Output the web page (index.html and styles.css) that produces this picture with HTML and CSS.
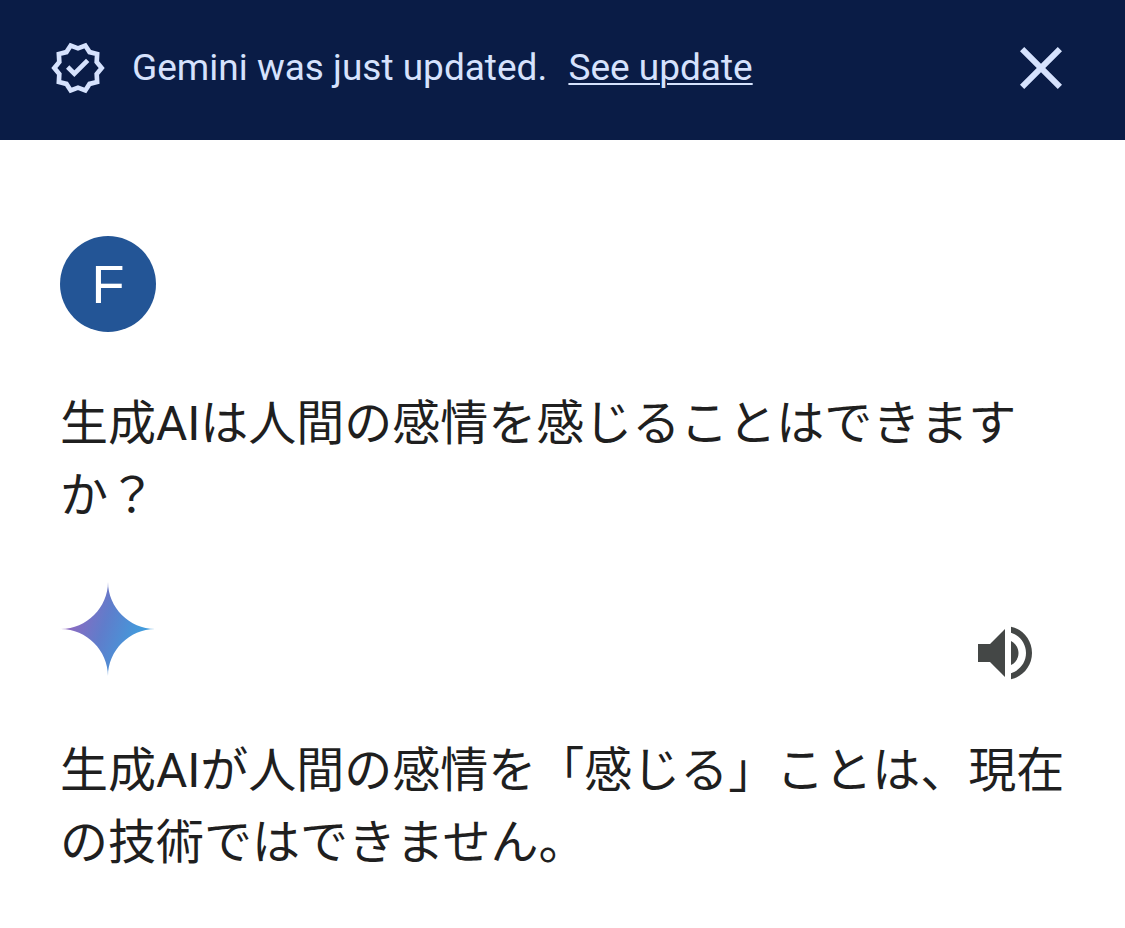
FILE: index.html
```html
<!DOCTYPE html>
<html lang="ja">
<head>
  <meta charset="UTF-8">
  <meta name="viewport" content="width=device-width, initial-scale=1.0">
  <title>Gemini</title>
  <link rel="stylesheet" href="styles.css">
</head>
<body>

  <header class="banner" lang="en">
    <svg class="banner-icon" viewBox="-81 -81 162 162" fill="none" stroke="currentColor" stroke-width="14" aria-hidden="true">
      <path d="M71 0 56.1 18.2 57.4 41.7 34.7 47.7 21.9 67.5 0 59-21.9 67.5-34.7 47.7-57.4 41.7-56.1 18.2-71 0-56.1-18.2-57.4-41.7-34.7-47.7-21.9-67.5 0-59 21.9-67.5 34.7-47.7 57.4-41.7 56.1-18.2z"/>
      <path d="M-31-3-11 17 29-23"/>
    </svg>
    <p class="banner-text">Gemini was just updated. <a href="#update">See update</a></p>
    <button class="icon-button" type="button" aria-label="Close">
      <svg viewBox="0 0 24 24" fill="currentColor"><path d="M19 6.41 17.59 5 12 10.59 6.41 5 5 6.41 10.59 12 5 17.59 6.41 19 12 13.41 17.59 19 19 17.59 13.41 12z"/></svg>
    </button>
  </header>

  <main class="chat">
    <section class="question">
      <div class="avatar">F</div>
      <p>生成AIは人間の感情を感じることはできますか？</p>
    </section>

    <section class="answer">
      <div class="answer-head">
        <svg class="spark" viewBox="0 0 96 96" aria-hidden="true">
          <defs>
            <linearGradient id="spark-color" gradientUnits="userSpaceOnUse" x1="8" y1="36" x2="78" y2="60">
              <stop offset="0" stop-color="#9168c0"/>
              <stop offset="0.5" stop-color="#5f7dcb"/>
              <stop offset="1" stop-color="#429bdc"/>
            </linearGradient>
          </defs>
          <path fill="url(#spark-color)" d="M48 1C48 26.500 26.500 48 1 48 26.500 48 48 69.500 48 95 48 69.500 69.500 48 95 48 69.500 48 48 26.500 48 1z"/>
        </svg>
        <button class="icon-button speak" type="button" aria-label="読み上げる">
          <svg viewBox="0 0 24 24" fill="currentColor"><path d="M3 9v6h4l5 5V4L7 9H3zm13.500 3c0-1.770-1.020-3.290-2.500-4.030v8.050c1.480-.730 2.500-2.250 2.500-4.020zM14 3.230v2.060c2.890.860 5 3.540 5 6.710s-2.110 5.850-5 6.710v2.060c4.010-.910 7-4.490 7-8.770s-2.990-7.860-7-8.770z"/></svg>
        </button>
      </div>
      <p>生成AIが人間の感情を「感じる」ことは、現在の技術ではできません。</p>
    </section>
  </main>

</body>
</html>
```

FILE: styles.css
```css
:root {
  --banner: #0a1c46;
  --banner-text: #d6e2fd;
  --text: #1f1f1f;
  --icon: #444746;
  --avatar: #235596;
}

body {
  margin: 0;
  font-family: Roboto, "Noto Sans CJK JP", sans-serif;
  background-color: white;
  color: var(--text);
}

p {
  margin: 0;
}

.banner {
  display: flex;
  align-items: center;
  min-height: 140px;
  box-sizing: border-box;
  padding: 0 48px 4px 51px;
  background-color: var(--banner);
  color: var(--banner-text);
}

.banner-icon {
  flex: none;
  width: 54px;
  height: 54px;
}

.banner-text {
  flex: 1;
  margin-left: 27px;
  font-size: 37px;
  line-height: 48px;
}

.banner-text a {
  margin-left: 12px;
  color: inherit;
  text-underline-offset: 3px;
  text-decoration-thickness: 2px;
}

.icon-button {
  flex: none;
  width: 72px;
  height: 72px;
  padding: 0;
  border: none;
  background: none;
  color: inherit;
  cursor: pointer;
}

.icon-button svg {
  display: block;
  width: 100%;
  height: 100%;
}

.chat {
  padding: 96px 60px 48px;
  font-size: 48px;
  line-height: 72px;
}

.avatar {
  width: 96px;
  height: 96px;
  margin-bottom: 56px;
  border-radius: 50%;
  background-color: var(--avatar);
  color: white;
  font-family: "Liberation Sans", sans-serif;
  font-size: 54px;
  line-height: 96px;
  text-align: center;
}

.answer {
  margin-top: 49px;
}

.answer-head {
  display: flex;
  justify-content: space-between;
  align-items: flex-start;
  margin-bottom: 46px;
}

.spark {
  width: 96px;
  height: 96px;
}

.speak {
  margin: 36px 24px 0 0;
  color: var(--icon);
}
```
